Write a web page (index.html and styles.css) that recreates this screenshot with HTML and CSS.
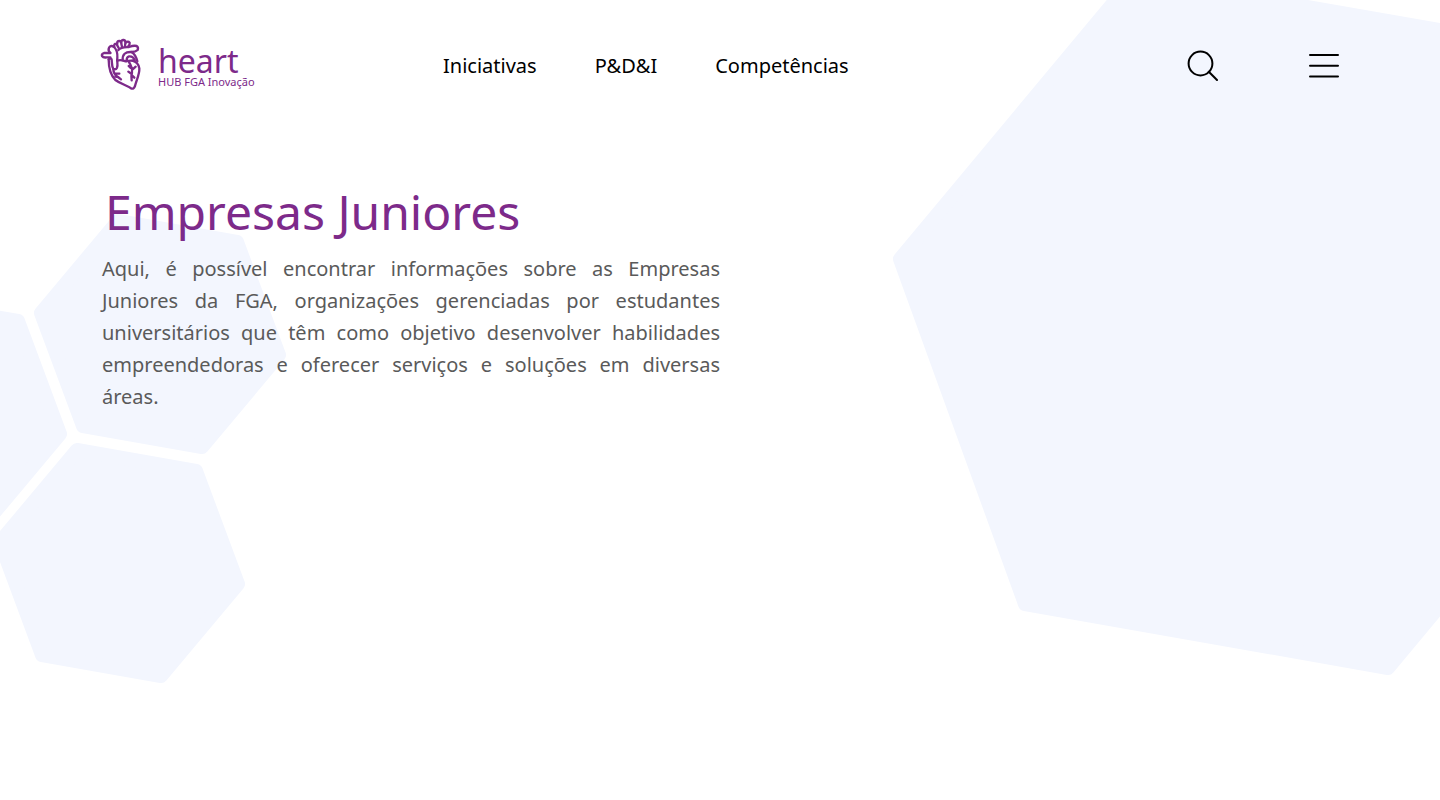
FILE: index.html
```html
<!DOCTYPE html>
<html lang="pt-BR">
<head>
<meta charset="utf-8">
<meta name="viewport" content="width=device-width, initial-scale=1">
<title>Empresas Juniores</title>
<link rel="stylesheet" href="styles.css">
</head>
<body>
<div class="backdrop" aria-hidden="true">
  <svg class="hexes" width="300" height="700" viewBox="0 0 300 700">
    <defs><polygon id="hex" points="119,21 42,113 -77,92 -119,-21 -42,-113 77,-92"/></defs>
    <use href="#hex" x="160" y="334"/>
    <use href="#hex" x="-59" y="413"/>
    <use href="#hex" x="119" y="563"/>
  </svg>
  <svg class="hexes" width="560" height="700" viewBox="880 0 560 700">
    <polygon points="1622,387 1388,668 1025,604 900,259 1135,-23 1497,40"/>
  </svg>
</div>
<header class="topbar">
  <a class="logo" href="#">
    <svg class="logo-mark" width="52" height="60" viewBox="0 0 156 180" aria-hidden="true">
      <path d="M38 76C38 103 42 122 58 138C73 149 90 153 105 163Q113 167 117 156C121 139 131 121 130 103C128 91 121 83 109 80"/>
      <path d="M43 57Q35 49 39 41Q45 32 54 39C64 48 65 58 64 72C62 83 67 91 63 101Q60 108 52 105C47 97 48 87 47 77Q46 70 38 76"/>
      <path d="M43 57L24 57Q16 60 18 66Q22 72 32 70L43 70"/>
      <path d="M55 38Q53 29 61 29L68 42M64 30Q62 21 70 21Q76 21 76 29L78 38M76 27Q76 17 83 18Q89 19 88 27L87 37M90 26Q96 20 101 26Q102 31 97 37"/>
      <path d="M67 48C75 38 92 40 99 39C107 36 114 34 122 36Q128 40 125 48Q119 54 106 54C88 53 79 61 80 78"/>
      <path d="M64 80C77 75 86 83 92 82C97 79 104 80 112 80M92 81Q91 69 99 67Q112 66 116 79M106 54Q119 61 124 82"/>
      <path d="M99 84C104 95 111 98 108 116Q105 125 107 139M98 96L104 102M110 106L119 98M107 120L97 113M107 123L115 131"/>
      <path d="M52 105Q52 121 66 129L75 136M55 118L70 119M58 128L66 129"/>
    </svg>
    <span class="logo-text"><span class="logo-name">heart</span><span class="logo-tag">HUB FGA Inovação</span></span>
  </a>
  <nav class="nav">
    <a href="#">Iniciativas</a>
    <a href="#">P&amp;D&amp;I</a>
    <a href="#">Competências</a>
  </nav>
  <div class="actions">
    <button type="button" class="icon-button" aria-label="Pesquisar">
      <svg width="32" height="32" viewBox="0 0 32 32" aria-hidden="true"><circle cx="14.5" cy="13.5" r="11.9"/><path d="M22.8 21.8L31 30"/></svg>
    </button>
    <button type="button" class="icon-button" aria-label="Menu">
      <svg width="32" height="32" viewBox="0 0 32 32" aria-hidden="true"><path d="M2 5H30M2 15.7H30M2 26.5H30"/></svg>
    </button>
  </div>
</header>
<main class="content">
  <h1 class="title">Empresas Juniores</h1>
  <p class="intro">Aqui, é possível encontrar informações sobre as Empresas Juniores da FGA, organizações gerenciadas por estudantes universitários que têm como objetivo desenvolver habilidades empreendedoras e oferecer serviços e soluções em diversas áreas.</p>
</main>
</body>
</html>
```
FILE: styles.css
```css
* { box-sizing: border-box; }

body {
  margin: 0;
  min-height: 100vh;
  background: #fff;
  color: #000;
  font-family: "Noto Sans", "Open Sans", sans-serif;
}

/* Decorative hexagons behind the page */
.backdrop {
  position: absolute;
  inset: 0;
  z-index: -1;
  display: flex;
  justify-content: space-between;
  align-items: flex-start;
  overflow: hidden;
}

.hexes {
  flex: none;
  fill: #f3f6fe;
  stroke: #f3f6fe;
  stroke-width: 14;
  stroke-linejoin: round;
}

.topbar {
  display: flex;
  align-items: center;
  padding: 34px 100px 34px 96px;
}

.logo {
  display: flex;
  gap: 10px;
  width: 347px;
  color: #7d2a8a;
  text-decoration: none;
}

.logo-mark {
  fill: none;
  stroke: #7d2a8a;
  stroke-width: 7;
  stroke-linecap: round;
  stroke-linejoin: round;
}

.logo-text {
  display: flex;
  flex-direction: column;
  padding-top: 11px;
}

.logo-name {
  font-size: 32px;
  line-height: 32px;
}

.logo-tag {
  font-size: 11px;
  line-height: 10px;
}

.nav {
  display: flex;
  gap: 58px;
  padding-top: 4px;
  font-size: 20px;
  line-height: 28px;
}

.nav a {
  color: #000;
  text-decoration: none;
}

.actions {
  display: flex;
  gap: 90px;
  margin-left: auto;
  padding-top: 4px;
}

.icon-button {
  display: block;
  padding: 0;
  border: 0;
  background: none;
  cursor: pointer;
}

.icon-button svg {
  display: block;
  fill: none;
  stroke: #000;
  stroke-width: 2;
  stroke-linecap: round;
}

.content {
  width: 50%;
  min-width: 320px;
  padding: 52px 0 0 102px;
}

.title {
  margin: 0;
  padding-left: 3px;
  font-size: 48px;
  font-weight: 400;
  line-height: 64px;
  color: #7d2a8a;
}

.intro {
  margin: 9px 0 0;
  font-size: 20px;
  line-height: 32px;
  color: #5a5a5a;
  text-align: justify;
}
```
